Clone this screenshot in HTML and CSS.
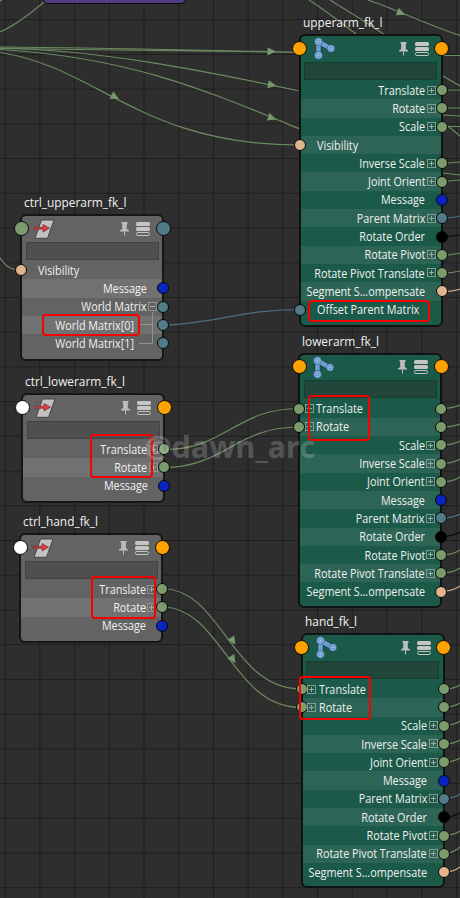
FILE: index.html
```html
<!DOCTYPE html>
<html lang="en">
<head>
<meta charset="utf-8">
<title>Node Editor</title>
<link rel="stylesheet" href="styles.css">
</head>
<body>
<main class="canvas" id="canvas">
  <svg class="wires" width="460" height="898" viewBox="0 0 460 898">
    <defs>
      <pattern id="grid" x="4.6" y="19.2" width="34.72" height="34.72" patternUnits="userSpaceOnUse">
        <path d="M0 .5H34.72M.5 0V34.72" stroke="#1e1e1e" stroke-width="1.2"/>
      </pattern>
    </defs>
    <rect width="460" height="898" fill="url(#grid)"/>
    <g class="wire">
      <path d="M0 32C16 25 30 14 44 2M0 1L2 0"/>
      <path d="M0 47C90 47.500 190 50 300 52.300M0 48.500C70 48.500 150 50 300 52.300"/>
      <path d="M0 48C100 50 200 70 300 91"/>
      <path d="M0 49.500C130 57 210 92 300 129"/>
      <path d="M0 52.500C100 68 140 145 300 145"/>
      <path d="M309 0C325 10 340 22 356 34M330 0Q358 17 385 35M368 0C400 11 428 25 460 35.500"/>
      <path d="M0 258C5 264 8 270 20 270"/>
      <path d="M164 449.500C225 450 236 408.500 299 408.500M164 467.500C225 467 236 427 299 427"/>
      <path d="M163 588.500C222 590 232 689 301 689M163 607C222 608 232 707.500 301 707.500"/>
      <path d="M443 55.500H460M443 76L460 86M443 90H460M443 108H460M443 115L460 116M443 126.500H460M443 122L460 136M443 163.500L460 162M443 173L460 175M443 181.500L460 180M443 255Q452 255 460 253M443 273Q452 273 460 271"/>
      <path d="M441 408.500Q452 408.500 460 405M441 427Q452 427 460 424M441 445Q452 445 460 441M441 463.500Q452 463.500 460 459M441 482Q452 482 460 477M441 555Q452 555 460 550M441 573Q452 573 460 568"/>
      <path d="M444 689Q453 689 460 685M444 707Q453 707 460 703M444 725.500Q453 725.500 460 721M444 744Q453 744 460 740M444 762Q453 762 460 758M444 835.500Q453 835.500 460 831M444 853.500Q453 853.500 460 847"/>
    </g>
    <g class="wire blue"><path d="M163 325C210 325 240 309.500 299 309.500M443 218Q453 218 460 216M441 518Q452 518 460 514M444 798.500Q453 798.500 460 794"/></g>
    <g class="wire black"><path d="M443 236.500Q453 236.500 460 235M441 536.500Q452 536.500 460 532M444 817Q453 817 460 813"/></g>
    <g class="wire peach"><path d="M443 291.500Q453 291.500 460 289M441 591.500Q452 591.500 460 586M444 872Q453 872 460 867"/></g>
    <g fill="#76986b">
      <path d="M-4-4L4.500 0L-4 4Z" transform="translate(271.500 51.500)"/>
      <path d="M-4-4L4.500 0L-4 4Z" transform="translate(272 85) rotate(10)"/>
      <path d="M-4-4L4.500 0L-4 4Z" transform="translate(272 118) rotate(20)"/>
      <path d="M-4-4L4.500 0L-4 4Z" transform="translate(115 97) rotate(28)"/>
      <path d="M-4-4L4.500 0L-4 4Z" transform="translate(401 13) rotate(22)"/>
      <path d="M-4-4L4.500 0L-4 4Z" transform="translate(233 641) rotate(58)"/>
      <path d="M-4-4L4.500 0L-4 4Z" transform="translate(233 659.500) rotate(56)"/>
    </g>
  </svg>
  <div class="top-node"></div>
</main>
<script src="script.js"></script>
</body>
</html>
```
FILE: styles.css
```css
* { box-sizing: border-box; }
body { margin: 0; background: #2e2e2e; }
.canvas {
  position: relative;
  width: 460px;
  height: 898px;
  overflow: hidden;
  background: #2e2e2e;
  color: #f0f0f0;
  font-family: "Open Sans", "Noto Sans", sans-serif;
}
.wires { position: absolute; inset: 0; }
.wire { fill: none; stroke: #6b8a61; stroke-width: 1.2; }
.blue { stroke: #4a7280; }
.black { stroke: #080808; }
.peach { stroke: #c9a484; }
.top-node {
  position: absolute;
  left: 43px;
  top: -20px;
  width: 143px;
  height: 24px;
  border: 1.5px solid #080808;
  border-radius: 5px;
  background: #523d82;
}
.node {
  position: absolute;
  width: 144px;
  border: 2px solid #0f1412;
  border-radius: 6px;
  background: #1b5a48;
}
.node.ctrl { border-color: #161616; background: #636363; }
.title {
  position: absolute;
  left: 2px;
  top: -23px;
  font-size: 13.5px;
  line-height: 18px;
  white-space: nowrap;
  transform: scaleX(.88);
  transform-origin: left;
}
.header {
  display: flex;
  align-items: center;
  height: 25.500px;
  padding: 0 12px 0 12px;
}
.header .type { margin-right: auto; }
.header .pin { margin-right: 7px; }
.header svg { display: block; overflow: visible; }
.field {
  height: 18px;
  margin: 0 3.500px 1.500px;
  border: 1px solid #163d31;
  background: #21473b;
}
.ctrl .field { border-color: #424242; background: #4f4f4f; }
.row {
  position: relative;
  display: flex;
  align-items: center;
  justify-content: flex-end;
  height: 18.300px;
  padding: 1px 15.500px 0 16px;
  font-size: 12.5px;
  line-height: 18px;
  white-space: nowrap;
}
.row:nth-child(even) { background: #2c6555; }
.ctrl .row:nth-child(even) { background: #717171; }
.row.in { justify-content: flex-start; }
.row.child { padding-right: 28.500px; }
.label { transform: scaleX(.865); transform-origin: right; }
.in .label { transform-origin: left; }
.port {
  position: absolute;
  right: -7px;
  top: 3.200px;
  width: 12px;
  height: 12px;
  border: 1.5px solid #080808;
  border-radius: 50%;
  background: #7b9b6d;
}
.port.left { right: auto; left: -7px; }
.port.big { top: 4.500px; right: -8.500px; width: 15px; height: 15px; background: #ffa100; }
.port.big.left { right: auto; left: -8.500px; }
.port.navy { background: #0924c0; }
.port.teal { background: #527b88; }
.port.dark { background: #000; }
.port.skin { background: #deb58d; }
.port.big.teal { background: #527b88; }
.port.big.green { background: #7b9b6d; }
.port.big.white { background: #fff; }
.expander {
  position: absolute;
  right: 5px;
  top: 4.500px;
  width: 9px;
  height: 9px;
  border: 1px solid #829b93;
  background:
    linear-gradient(#9aaba4, #9aaba4) center / 5px 1px no-repeat,
    linear-gradient(#9aaba4, #9aaba4) center / 1px 5px no-repeat;
}
.ctrl .expander { border-color: #929292; }
.expander.minus { background: linear-gradient(#aaa, #aaa) center / 5px 1px no-repeat; }
.in .expander { right: auto; left: 4.500px; }
.tree { position: absolute; z-index: 1; right: 8px; top: 14px; width: 15px; height: 32px; }
.mark { position: absolute; border: 2px solid #f60000; border-radius: 4px; }
.watermark {
  position: absolute;
  left: 144px;
  top: 424px;
  font: bold 30.6px/44px "Noto Sans", sans-serif;
  color: rgba(255, 255, 255, .2);
}
```
FILE: script.js
```javascript
const canvas = document.getElementById('canvas');

const jointIcon = `<svg class="type" width="20" height="21" viewBox="0 0 20 21">
  <path d="M5.500 3.500L17.500 10.500M5.500 3.500V17.500" stroke="#183f50" stroke-width="6"/>
  <path d="M5.500 3.500L17.500 10.500M5.500 3.500V17.500" stroke="#6f9fd0" stroke-width="4.500"/>
  <g fill="#82afe0" stroke="#2c5878" stroke-width=".6"><circle cx="5.500" cy="3.600" r="3.900"/><circle cx="5.500" cy="17.300" r="3.900"/><circle cx="18" cy="10.500" r="3.700"/></g>
  <g fill="#b8d4ef" stroke="#4a75a0" stroke-width=".7"><circle cx="5.500" cy="3.600" r="1.300"/><circle cx="5.500" cy="17.300" r="1.300"/><circle cx="18" cy="10.500" r="1.300"/></g>
</svg>`;
const transformIcon = `<svg class="type" width="20" height="20" viewBox="0 0 20 20">
  <path d="M7.500 1H20L13.500 19.300H1Z" fill="#c2c2c2" stroke="#444"/>
  <path d="M0 8.300H9V5.500L15.500 9.200L9 13V10.200H0Z" fill="#d84045" stroke="#752b2d" stroke-width=".7"/>
</svg>`;
const tools = `<svg class="pin" width="9" height="14" viewBox="0 0 9 14"><path d="M1.500 0H7.500V1.500L6.800 2V7L9 8.500V9.500H5V13.500H4V9.500H0V8.500L2.200 7V2L1.500 1.500Z" fill="#bcbcbc"/></svg>
<svg width="14" height="14" viewBox="0 0 14 14"><rect width="14" height="4" rx="1.500" fill="#c5c5c5"/><rect y="5" width="14" height="4" rx="1.500" fill="#c5c5c5"/><rect x=".5" y="10.500" width="13" height="3" rx="1.300" fill="none" stroke="#c5c5c5"/></svg>`;

// Row format: [label, port colour, expander, side]
const tail = [
  ['Scale', '', 1], ['Inverse Scale', '', 1], ['Joint Orient', '', 1], ['Message', 'navy'],
  ['Parent Matrix', 'teal', 1], ['Rotate Order', 'dark'], ['Rotate Pivot', '', 1],
  ['Rotate Pivot Translate', '', 1], ['Segment S...ompensate', 'skin']
];
const inputs = [['Translate', '', 1, 'both'], ['Rotate', '', 1, 'both']];
const outputs = [['Translate', '', 1], ['Rotate', '', 1]];
const ctrlRows = [...outputs, ['Message', 'navy']];
const nodes = [
  { x: 298.6, y: 34, h: 293, title: 'upperarm_fk_l', rows: [...outputs, tail[0], ['Visibility', 'skin', 0, 'in'], ...tail.slice(1), ['Offset Parent Matrix', 'teal', 0, 'in']] },
  { x: 298.4, y: 352.5, h: 255.5, title: 'lowerarm_fk_l', rows: [...inputs, ...tail] },
  { x: 300.6, y: 633, h: 255, title: 'hand_fk_l', rows: [...inputs, ...tail] },
  { x: 20, y: 214, h: 147, title: 'ctrl_upperarm_fk_l', ctrl: 1, left: 'green', right: 'teal', rows: [
    ['Visibility', 'skin', 0, 'in'], ['Message', 'navy'], ['World Matrix', 'teal', 2],
    ['World Matrix[0]', 'teal', 0, 'child'], ['World Matrix[1]', 'teal', 0, 'child']] },
  { x: 21, y: 393, h: 110, title: 'ctrl_lowerarm_fk_l', ctrl: 1, left: 'white', rows: ctrlRows },
  { x: 19.4, y: 533, h: 109.5, title: 'ctrl_hand_fk_l', ctrl: 1, left: 'white', rows: ctrlRows }
];

function row([label, color, expander, side = '']) {
  const isIn = side === 'in' || side === 'both';
  const port = s => `<i class="port ${s} ${color}"></i>`;
  const box = expander ? `<i class="expander ${expander === 2 ? 'minus' : ''}"></i>` : '';
  const tree = expander === 2 ? '<svg class="tree" viewBox="0 0 15 32"><path d="M13.500 0V31.500H0M1 12.500H13.500" fill="none" stroke="#929292"/></svg>' : '';
  return `<div class="row ${isIn ? 'in' : side}">${isIn ? port('left') : ''}${box}${tree}<span class="label">${label}</span>${side !== 'in' ? port('') : ''}</div>`;
}

for (const n of nodes) {
  canvas.insertAdjacentHTML('beforeend', `<section class="node ${n.ctrl ? 'ctrl' : ''}" style="left:${n.x}px;top:${n.y}px;height:${n.h}px">
    <div class="title">${n.title}</div>
    <i class="port big left ${n.left || ''}"></i><i class="port big ${n.right || ''}"></i>
    <div class="header">${n.ctrl ? transformIcon : jointIcon}${tools}</div>
    <div class="field"></div>
    <div class="rows">${n.rows.map(row).join('')}</div>
  </section>`);
}

const marks = [[42, 314, 98, 22], [308, 300, 122, 22], [90, 434, 63, 44], [308, 395, 62, 46], [91, 576, 65, 43], [299, 676, 72, 44]];
for (const [x, y, w, h] of marks) {
  canvas.insertAdjacentHTML('beforeend', `<div class="mark" style="left:${x}px;top:${y}px;width:${w}px;height:${h}px"></div>`);
}
canvas.insertAdjacentHTML('beforeend', '<div class="watermark">@dawn_arc</div>');
```
